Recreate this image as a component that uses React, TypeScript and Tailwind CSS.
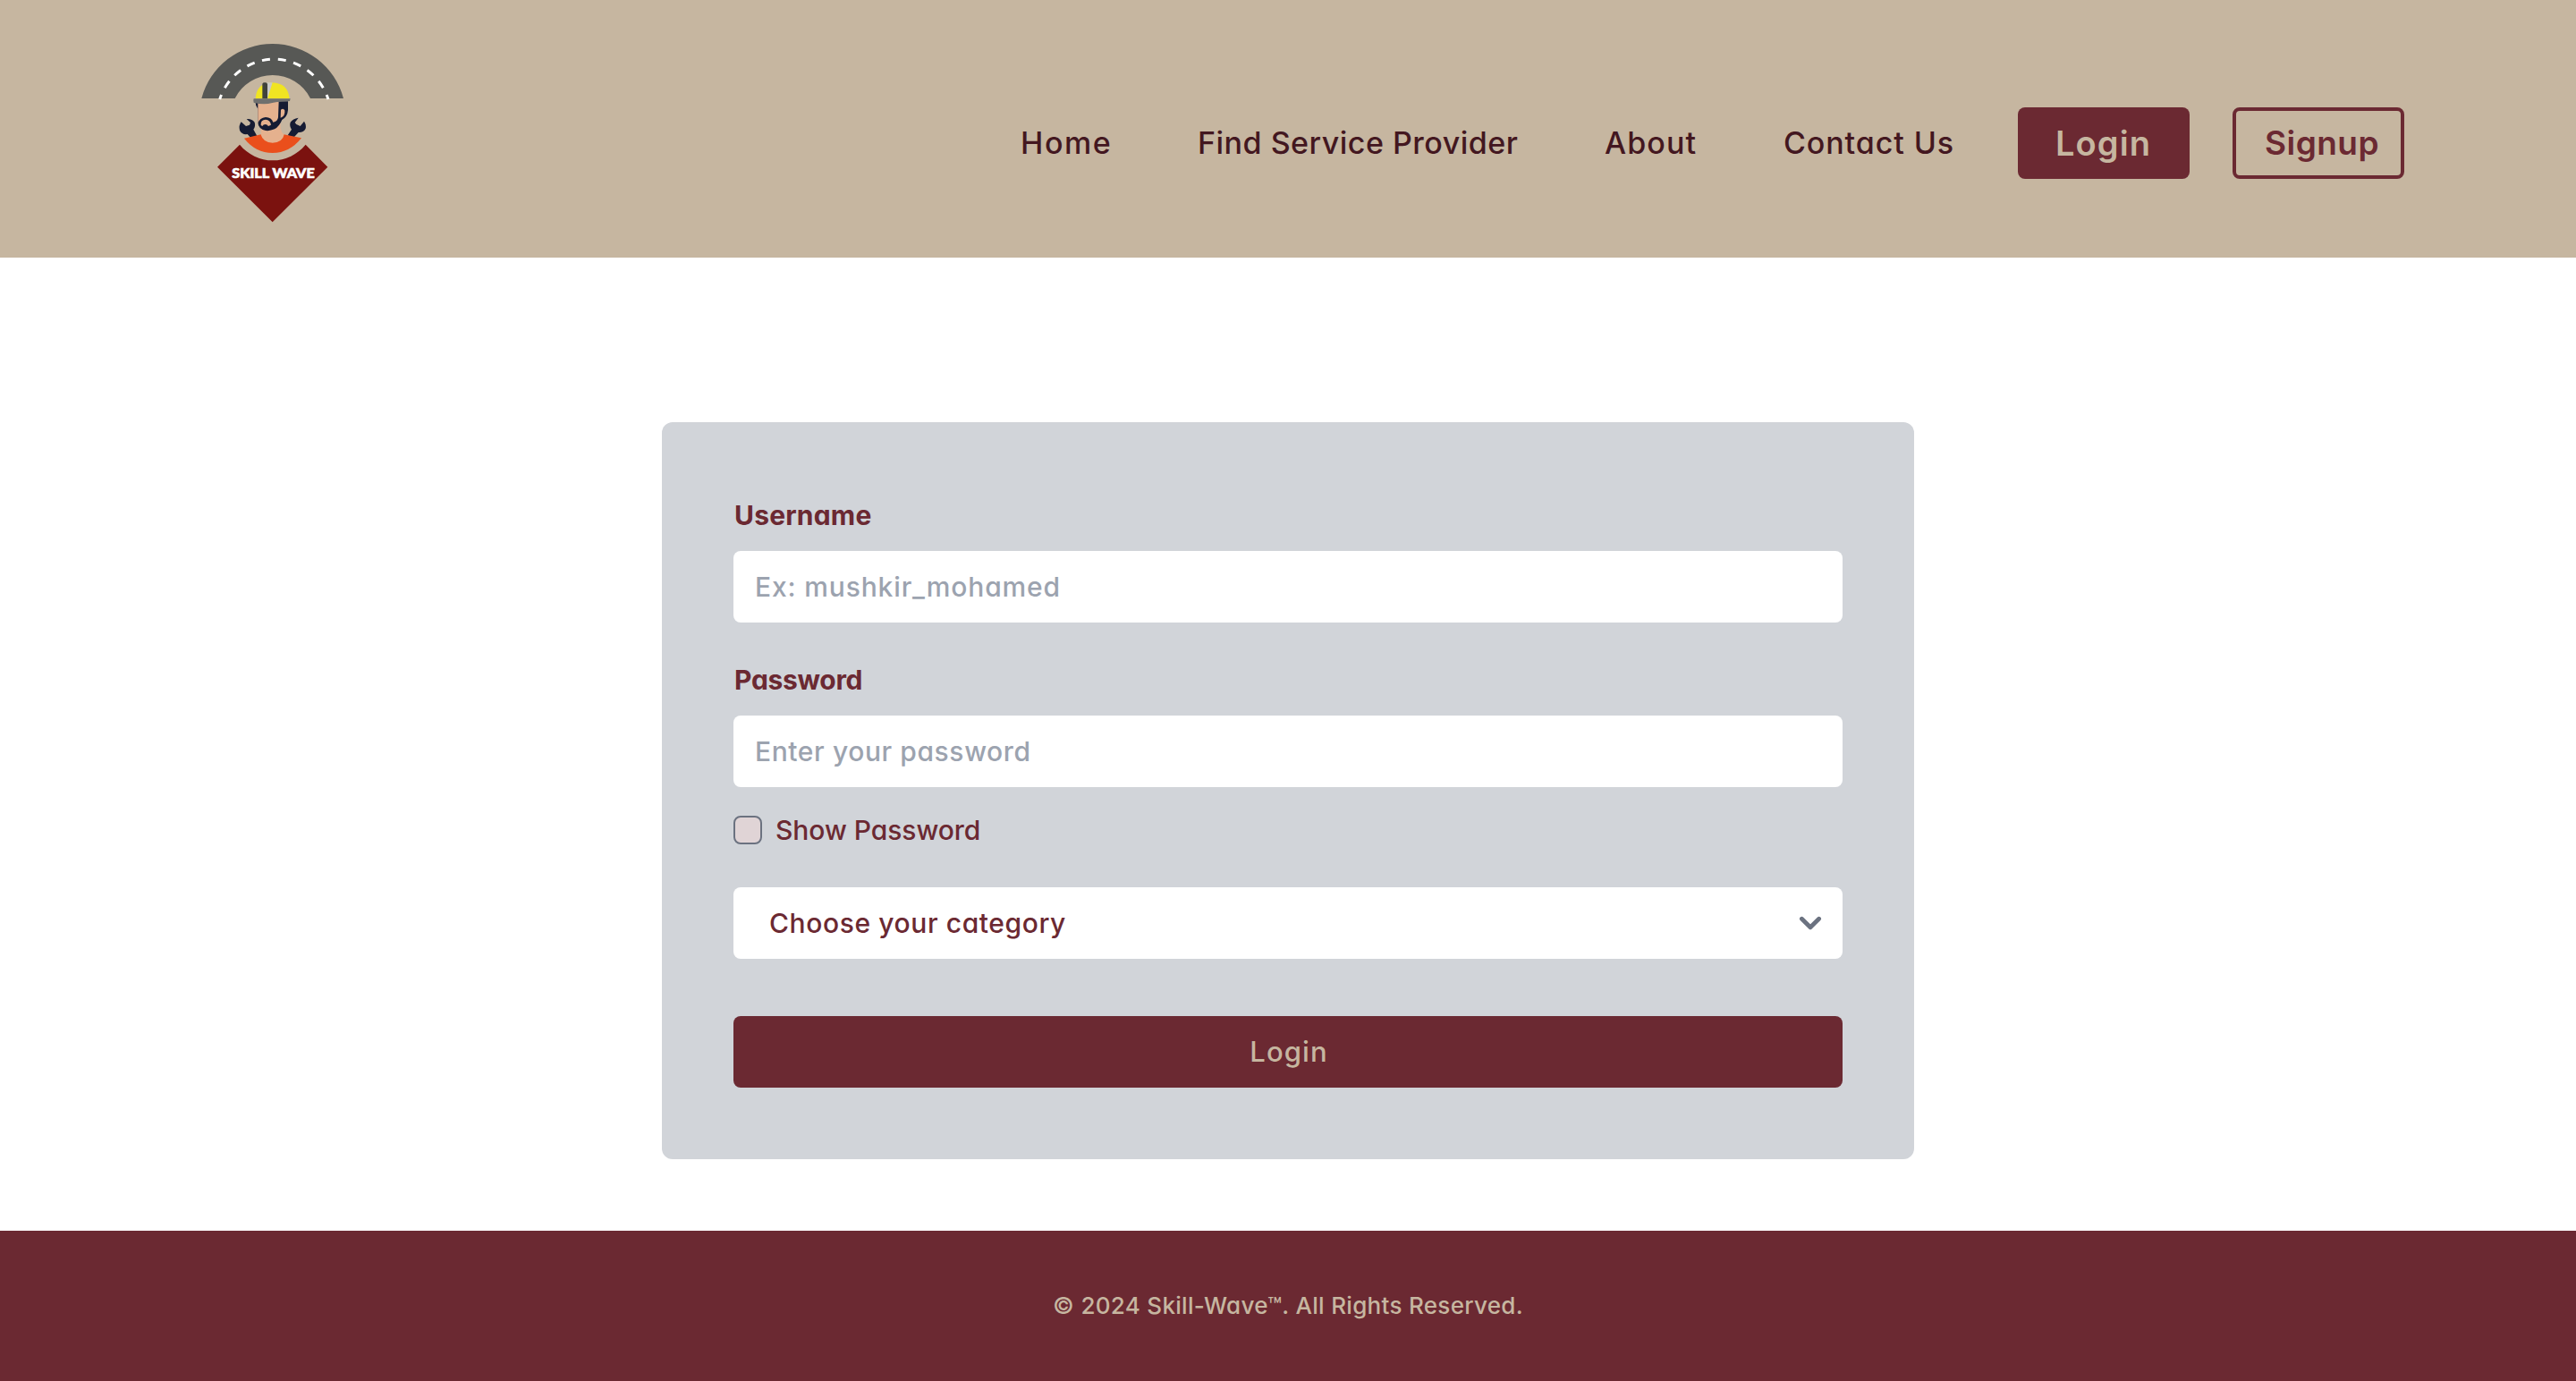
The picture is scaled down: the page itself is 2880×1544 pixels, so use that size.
import React from "react";

function Logo() {
  return (
    <svg viewBox="0 0 630 690" className="mt-[30px] h-[230px] w-[210px] shrink-0" role="img" aria-label="Skill Wave">
      {/* road */}
      <path d="M76 240A246.300 246.300 0 0 1 552 240H441A141.600 141.600 0 0 0 188 240Z" fill="#575855" />
      <g fill="none" stroke="#fff" strokeWidth="9" strokeDasharray="27 26" strokeDashoffset="-13.500">
        <path d="M319 108A194 194 0 0 1 501 243" />
        <path d="M319 108A194 194 0 0 0 137 243" />
      </g>
      {/* wrenches */}
      <g fill="#151b33">
        <path d="M209 319L225 333L237 329L240 321L227 309Q244 307 254 320Q258 333 250 344L262 366L240 371L230 360Q212 363 204 347Q200 331 209 319Z" />
        <path d="M420 317L407 333L394 327L389 321L401 305Q382 308 374 320Q370 332 378 344L365 364L385 371L401 354Q418 355 425 341Q428 328 420 317Z" />
      </g>
      {/* shirt and neck */}
      <path d="M219 374L275 361H352L411 373Q372 423 314 423Q258 423 219 374Z" fill="#ea4f1c" />
      <path d="M275 340L340 318L341 342Q344 355 353 361Q348 389 314 389Q282 387 275 362Z" fill="#e5b18e" />
      {/* head */}
      <path d="M256 250H366V279Q364 302 346 312Q337 334 321 343Q305 350 291 348Q266 342 265 320V275Q257 265 256 250Z" fill="#151b33" />
      <path d="M265 254L335 250L333 304Q331 318 316 320Q311 304 291 303Q271 305 265 323Z" fill="#e5b18e" />
      <path d="M342 278Q350 271 355 280Q357 301 341 305Z" fill="#e5b18e" />
      <path d="M275 330Q274 311 291 311Q307 312 309 329L300 333Q296 327 290 327Q283 327 280 333Z" fill="#e5b18e" />
      {/* helmet */}
      <path d="M257 241Q260 189 313 187Q366 189 371 241Z" fill="#f0e422" />
      <path d="M295 187H314L297 241Z" fill="#c8c8c6" />
      <path d="M280 241V191Q282 187 288 187Q295 187 297 191V241Z" fill="#40413c" />
      <path d="M251 241H374L372 249Q323 251 300 258Q270 260 251 254Q248 248 251 241Z" fill="#70706e" />
      {/* badge */}
      <path d="M204 395A141.700 141.700 0 0 0 425 395L499 470L314 655L129 470Z" fill="#7b120f" />
      <text x="178" y="508" fill="#fff" stroke="#fff" strokeWidth="2" fontFamily="Lato, sans-serif" fontWeight="900" fontSize="47" textLength="277" lengthAdjust="spacingAndGlyphs">SKILL WAVE</text>
    </svg>
  );
}

export default function App() {
  return (
    <div className="flex h-[1544px] w-[2880px] flex-col overflow-hidden bg-white font-['Inter',sans-serif] text-[30px] leading-[48px] font-[450] text-[#6b2932] [font-feature-settings:'cv11']">
      <header className="flex h-[288px] shrink-0 items-start justify-between bg-[#c6b6a0] pr-48 pl-[200px]">
        <Logo />
        <nav className="mt-[120px] flex h-20 items-center text-[34px] whitespace-nowrap text-[#431720]">
          <a className="w-[198px] tracking-[1.6px]">Home</a>
          <a className="w-[455px] tracking-[0.5px]">Find Service Provider</a>
          <a className="w-[200px] tracking-[1.1px]">About</a>
          <a className="w-[262px] tracking-[0.9px]">Contact Us</a>
          <button className="h-20 w-48 rounded-lg bg-[#6b2932] pl-[42px] text-left text-[38px] font-semibold tracking-[1.1px] text-[#c6b6a0]">Login</button>
          <button className="ml-12 h-20 w-48 rounded-lg border-4 border-[#6b2932] pl-8 text-left text-[37px] font-semibold tracking-[0.46px] text-[#6b2932]">Signup</button>
        </nav>
      </header>

      <main className="flex grow flex-col items-center pt-[184px]">
        <form className="flex h-[824px] w-[1400px] flex-col rounded-xl bg-[#d1d4d9] p-20">
          <label className="flex h-16 items-start pl-px font-bold tracking-[0.2px]">Username</label>
          <input className="h-20 rounded-lg bg-white px-6 tracking-[0.85px] placeholder:text-[#9ca3af]" placeholder="Ex: mushkir_mohamed" />
          <label className="mt-10 flex h-16 items-start pl-px font-bold tracking-[-0.3px]">Password</label>
          <input className="h-20 rounded-lg bg-white px-6 tracking-[0.6px] placeholder:text-[#9ca3af]" placeholder="Enter your password" />
          <div className="mt-6 flex h-12 items-center">
            <span className="size-8 rounded-lg border-2 border-[#6b7280] bg-[#e0d4d6]" />
            <span className="ml-[15px] tracking-[-0.05px]">Show Password</span>
          </div>
          <div className="mt-10 flex h-20 items-center justify-between rounded-lg bg-white pr-3 pl-10">
            <span className="tracking-[0.6px]">Choose your category</span>
            <svg viewBox="0 0 20 20" className="size-12" fill="none" stroke="#6b7280" strokeWidth="2" strokeLinecap="round" strokeLinejoin="round">
              <path d="M6 8l4 4 4-4" />
            </svg>
          </div>
          <button type="button" className="mt-16 h-20 rounded-lg bg-[#6b2932] pl-0.5 text-[31px] tracking-[1.1px] text-[#c6b6a0]">Login</button>
        </form>
      </main>

      <footer className="flex h-[168px] shrink-0 items-center justify-center bg-[#6b2932] text-[26px] tracking-[0.3px] text-[#c6b6a0]">
        © 2024 Skill-Wave™. All Rights Reserved.
      </footer>
    </div>
  );
}
